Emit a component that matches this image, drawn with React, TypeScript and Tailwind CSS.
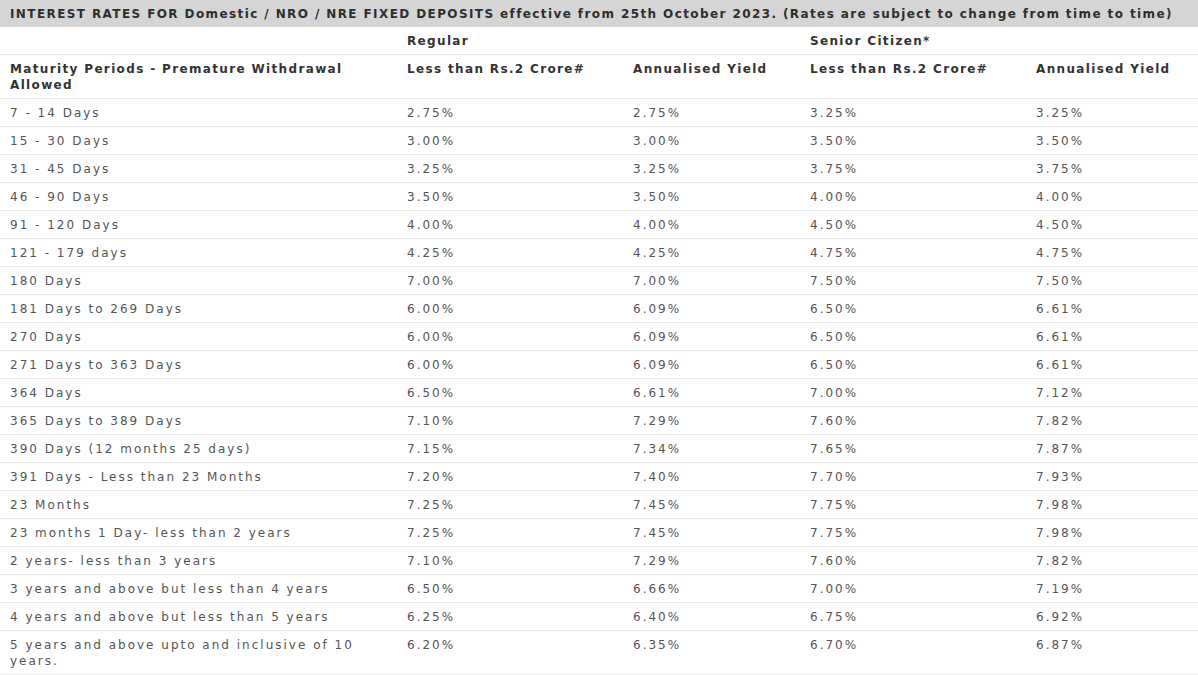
const rows: string[][] = [
  ['7 - 14 Days', '2.75%', '2.75%', '3.25%', '3.25%'],
  ['15 - 30 Days', '3.00%', '3.00%', '3.50%', '3.50%'],
  ['31 - 45 Days', '3.25%', '3.25%', '3.75%', '3.75%'],
  ['46 - 90 Days', '3.50%', '3.50%', '4.00%', '4.00%'],
  ['91 - 120 Days', '4.00%', '4.00%', '4.50%', '4.50%'],
  ['121 - 179 days', '4.25%', '4.25%', '4.75%', '4.75%'],
  ['180 Days', '7.00%', '7.00%', '7.50%', '7.50%'],
  ['181 Days to 269 Days', '6.00%', '6.09%', '6.50%', '6.61%'],
  ['270 Days', '6.00%', '6.09%', '6.50%', '6.61%'],
  ['271 Days to 363 Days', '6.00%', '6.09%', '6.50%', '6.61%'],
  ['364 Days', '6.50%', '6.61%', '7.00%', '7.12%'],
  ['365 Days to 389 Days', '7.10%', '7.29%', '7.60%', '7.82%'],
  ['390 Days (12 months 25 days)', '7.15%', '7.34%', '7.65%', '7.87%'],
  ['391 Days - Less than 23 Months', '7.20%', '7.40%', '7.70%', '7.93%'],
  ['23 Months', '7.25%', '7.45%', '7.75%', '7.98%'],
  ['23 months 1 Day- less than 2 years', '7.25%', '7.45%', '7.75%', '7.98%'],
  ['2 years- less than 3 years', '7.10%', '7.29%', '7.60%', '7.82%'],
  ['3 years and above but less than 4 years', '6.50%', '6.66%', '7.00%', '7.19%'],
  ['4 years and above but less than 5 years', '6.25%', '6.40%', '6.75%', '6.92%'],
  ['5 years and above upto and inclusive of 10 years.', '6.20%', '6.35%', '6.70%', '6.87%'],
]

const cell = 'px-[10px] pt-[6px] pb-[5px] align-top text-left'

export default function App() {
  return (
    <div className="w-[1198px] h-[675px] overflow-hidden bg-white font-['DejaVu_Sans',Verdana,sans-serif] text-[12px] leading-[16px] tracking-[2px]">
      <div className="h-[27px] bg-[#d5d5d5] px-[10px] flex items-center font-bold text-[#2e2e2e] text-[12px] tracking-[1.4px] whitespace-nowrap">
        INTEREST RATES FOR Domestic / NRO / NRE FIXED DEPOSITS effective from 25th October 2023. (Rates are subject to change from time to time)
      </div>
      <table className="w-full table-fixed border-collapse">
        <colgroup>
          <col className="w-[397px]" />
          <col className="w-[226px]" />
          <col className="w-[177px]" />
          <col className="w-[226px]" />
          <col />
        </colgroup>
        <thead className="font-bold text-[#333] tracking-[1.35px]">
          <tr className="border-b border-[#ececec]">
            <th className={cell}></th>
            <th className={cell}>Regular</th>
            <th className={cell}></th>
            <th className={cell}>Senior Citizen*</th>
            <th className={cell}></th>
          </tr>
          <tr className="border-b border-[#ececec]">
            <th className={`${cell} pb-[4px]`}>
              Maturity Periods - Premature Withdrawal
              <br />
              Allowed
            </th>
            <th className={`${cell} whitespace-nowrap`}>Less than Rs.2 Crore#</th>
            <th className={`${cell} whitespace-nowrap`}>Annualised Yield</th>
            <th className={`${cell} whitespace-nowrap`}>Less than Rs.2 Crore#</th>
            <th className={`${cell} whitespace-nowrap`}>Annualised Yield</th>
          </tr>
        </thead>
        <tbody className="text-[#555]">
          {rows.map((r, idx) => (
            <tr key={idx} className="border-b border-[#ececec]">
              {r.map((v, i) => (
                <td key={i} className={i === 0 ? `${cell} pr-[30px]` : cell}>
                  {v}
                </td>
              ))}
            </tr>
          ))}
        </tbody>
      </table>
    </div>
  )
}
